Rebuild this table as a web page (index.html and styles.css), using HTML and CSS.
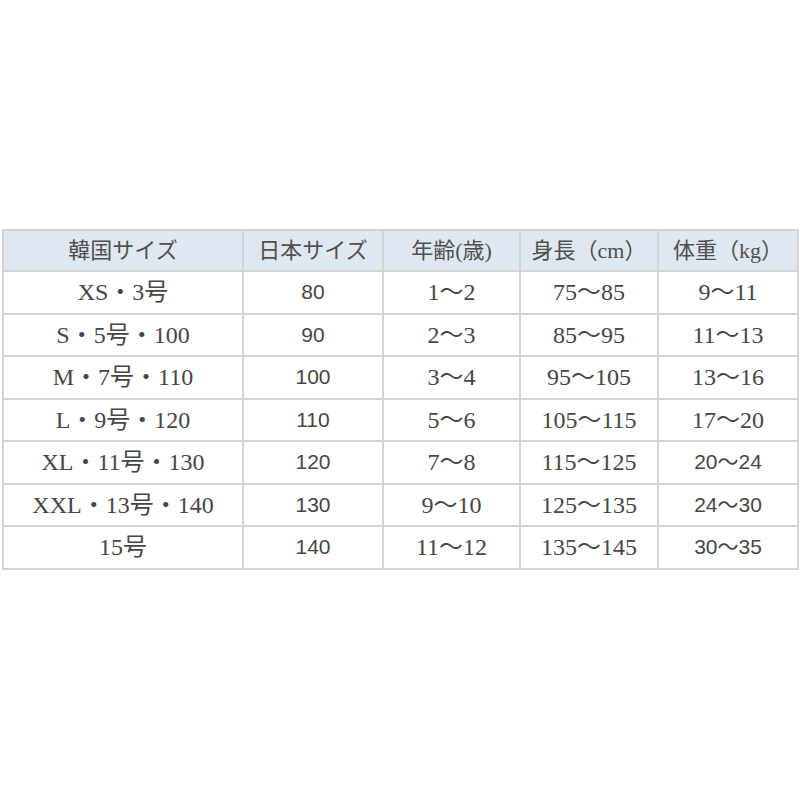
FILE: index.html
```html
<!DOCTYPE html>
<html lang="ja">
<head>
<meta charset="utf-8">
<link rel="stylesheet" href="styles.css">
</head>
<body>
<div class="page">
<table class="size">
<colgroup>
<col class="c1"><col class="c2"><col class="c3"><col class="c4"><col class="c5">
</colgroup>
<thead>
<tr><th>韓国サイズ</th><th>日本サイズ</th><th>年齢(歳)</th><th>身長（cm）</th><th>体重（kg）</th></tr>
</thead>
<tbody>
<tr><td>XS・3号</td><td class="sans">80</td><td>1〜2</td><td>75〜85</td><td>9〜11</td></tr>
<tr><td>S・5号・100</td><td class="sans">90</td><td>2〜3</td><td>85〜95</td><td>11〜13</td></tr>
<tr><td>M・7号・110</td><td class="sans">100</td><td>3〜4</td><td>95〜105</td><td>13〜16</td></tr>
<tr><td>L・9号・120</td><td class="sans">110</td><td>5〜6</td><td>105〜115</td><td>17〜20</td></tr>
<tr><td>XL・11号・130</td><td class="sans">120</td><td>7〜8</td><td>115〜125</td><td class="sans">20〜24</td></tr>
<tr><td>XXL・13号・140</td><td class="sans">130</td><td>9〜10</td><td>125〜135</td><td class="sans">24〜30</td></tr>
<tr><td>15号</td><td class="sans">140</td><td>11〜12</td><td>135〜145</td><td class="sans">30〜35</td></tr>
</tbody>
</table>
</div>
</body>
</html>
```
FILE: styles.css
```css
html, body {
  margin: 0;
  padding: 0;
  background: #ffffff;
}
.page {
  padding: 229px 0 0 2px;
}
.size {
  border-collapse: collapse;
  table-layout: fixed;
  width: 795px;
  font-family: "Liberation Serif", "Noto Sans CJK JP", serif;
  font-size: 24px;
  color: #464646;
  text-spacing-trim: space-all;
}
.c1 { width: 240px; }
.c2 { width: 140px; }
.c3 { width: 137px; }
.c4 { width: 138px; }
.c5 { width: 140px; }
.size th, .size td {
  border: 2px solid #d3d3d3;
  text-align: center;
  padding: 0;
  white-space: nowrap;
  line-height: 20px;
}
.size th {
  height: 39px;
  background: #dfe7f1;
  font-weight: normal;
  color: #505050;
  font-size: 22px;
}
.size td {
  height: 40.5px;
}
.size td.sans {
  font-family: "Liberation Sans", "Noto Sans CJK JP", sans-serif;
  font-size: 21px;
}
```
